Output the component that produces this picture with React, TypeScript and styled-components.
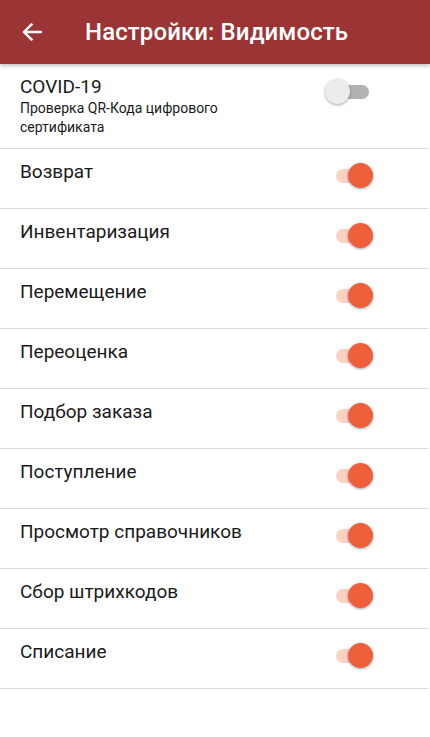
import styled, { createGlobalStyle } from 'styled-components';

const GlobalStyle = createGlobalStyle`
  html, body {
    margin: 0;
    padding: 0;
    background: #ffffff;
    font-family: Roboto, 'Noto Sans', sans-serif;
  }
`;

const Screen = styled.div`
  width: 430px;
  min-height: 737px;
  background: #ffffff;
`;

const Header = styled.header`
  height: 64px;
  background: #9b3535;
  display: flex;
  align-items: center;
  padding: 0 0 0 21px;
  box-sizing: border-box;
  box-shadow: 0 2px 4px rgba(0, 0, 0, 0.25);
  position: relative;
  z-index: 1;
`;

const BackButton = styled.div`
  width: 22px;
  height: 24px;
  display: flex;
  align-items: center;
  justify-content: center;
  margin-right: 42px;
`;

const Title = styled.h1`
  margin: 0;
  color: #ffffff;
  font-size: 24px;
  font-weight: 500;
  letter-spacing: 0.1px;
`;

const List = styled.div`
  display: flex;
  flex-direction: column;
`;

const Row = styled.div<{ $tall?: boolean }>`
  height: ${(p) => (p.$tall ? 85 : 60)}px;
  box-sizing: border-box;
  border-bottom: 1px solid #dcdcdc;
  display: flex;
  justify-content: space-between;
  align-items: flex-start;
  padding: 11px 0 0 20px;
  margin-right: 2px;
`;

const Texts = styled.div`
  display: flex;
  flex-direction: column;
`;

const Label = styled.div`
  font-size: 19px;
  color: #1a1a1a;
  line-height: 24px;
`;

const Sub = styled.div`
  font-size: 14px;
  color: #1a1a1a;
  line-height: 19px;
  width: 240px;
`;

const SwitchBox = styled.div<{ $on: boolean }>`
  position: relative;
  width: 40px;
  height: 26px;
  margin-top: ${(p) => (p.$on ? '3px' : '4px')};
  margin-right: ${(p) => (p.$on ? '54px' : '57px')};
`;

const Track = styled.div<{ $on: boolean }>`
  position: absolute;
  left: 2px;
  top: 6px;
  width: 36px;
  height: 14px;
  border-radius: 7px;
  background: ${(p) => (p.$on ? '#fcd0c3' : '#b2b2b2')};
`;

const Thumb = styled.div<{ $on: boolean }>`
  position: absolute;
  top: 0;
  left: ${(p) => (p.$on ? '14px' : '-6px')};
  width: 25px;
  height: 25px;
  border-radius: 50%;
  background: ${(p) => (p.$on ? '#ef5f3c' : '#ececec')};
  box-shadow: 0 1px 3px rgba(0, 0, 0, 0.35);
`;

const Switch = ({ on }: { on: boolean }) => (
  <SwitchBox $on={on}>
    <Track $on={on} />
    <Thumb $on={on} />
  </SwitchBox>
);

const items = [
  'Возврат',
  'Инвентаризация',
  'Перемещение',
  'Переоценка',
  'Подбор заказа',
  'Поступление',
  'Просмотр справочников',
  'Сбор штрихкодов',
  'Списание',
];

const App = () => {
  return (
    <Screen>
      <GlobalStyle />
      <Header>
        <BackButton>
          <svg width="20" height="18" viewBox="0 0 20 18" fill="none">
            <path
              d="M19 9H2.5M9.5 1.5L2 9l7.5 7.5"
              stroke="#fff"
              strokeWidth="2.4"
              strokeLinecap="square"
            />
          </svg>
        </BackButton>
        <Title>Настройки: Видимость</Title>
      </Header>
      <List>
        <Row $tall>
          <Texts>
            <Label>COVID-19</Label>
            <Sub>Проверка QR-Кода цифрового сертификата</Sub>
          </Texts>
          <Switch on={false} />
        </Row>
        {items.map((name) => (
          <Row key={name}>
            <Label>{name}</Label>
            <Switch on />
          </Row>
        ))}
      </List>
    </Screen>
  );
};

export default App;
